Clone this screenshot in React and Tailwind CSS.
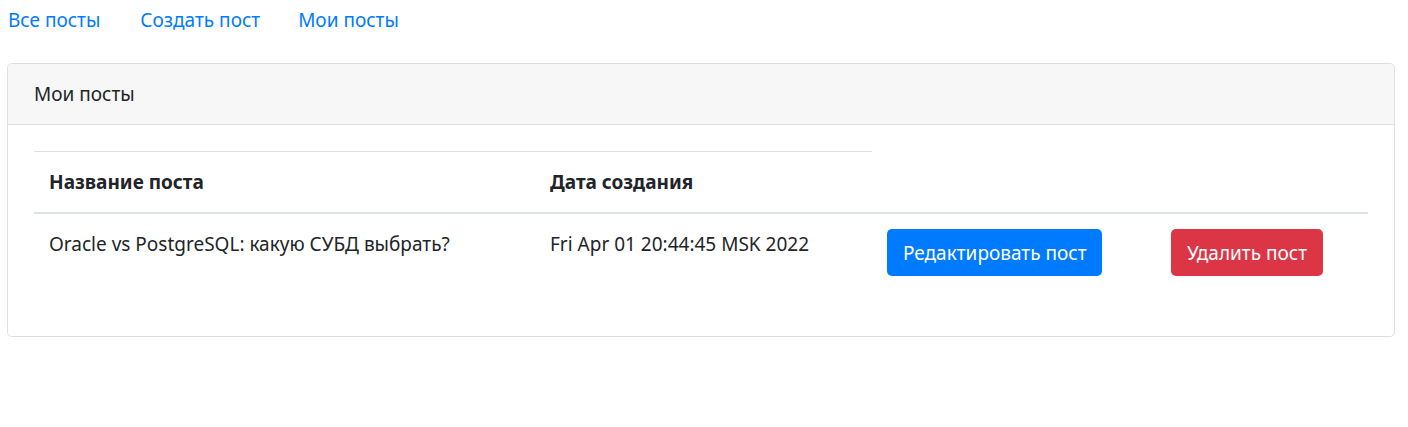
import React from 'react'

const posts = [
  { id: 1, title: 'Oracle vs PostgreSQL: какую СУБД выбрать?', date: 'Fri Apr 01 20:44:45 MSK 2022' },
]

const App = () => {
  return (
    <div className="min-h-[427px] bg-white text-[19px] leading-[30px] text-[#212529]" style={{ fontFamily: '"Noto Sans", "Open Sans", sans-serif' }}>
      <nav className="flex pt-[5px] pl-[8px]">
        <a href="#" className="text-[#007bff] mr-[40px]">Все посты</a>
        <a href="#" className="text-[#007bff] mr-[38px]">Создать пост</a>
        <a href="#" className="text-[#007bff]">Мои посты</a>
      </nav>

      <div className="ml-[7px] mt-[28px] w-[1388px] rounded-[5px] border border-[#dfdfdf]">
        <div className="h-[61px] rounded-t-[5px] border-b border-[#dfdfdf] bg-[#f7f7f7] px-[26px] py-[15px]">
          Мои посты
        </div>
        <div className="p-[26px] pb-[45px]">
          <table className="w-full border-collapse text-left">
            <thead>
              <tr>
                <th className="w-[501px] border-t border-b-2 border-[#dee2e6] px-[15px] pt-[15px] pb-[15px] font-bold">Название поста</th>
                <th className="w-[337px] border-t border-b-2 border-[#dee2e6] px-[15px] pt-[15px] pb-[15px] font-bold">Дата создания</th>
              </tr>
            </thead>
            <tbody>
              {posts.map((post) => (
                <tr key={post.id}>
                  <td className="border-t-2 border-[#dee2e6] p-[15px] align-top">{post.title}</td>
                  <td className="border-t-2 border-[#dee2e6] p-[15px] align-top">{post.date}</td>
                  <td className="w-[284px] border-t-2 border-[#dee2e6] p-[15px]">
                    <button className="block h-[47px] rounded-[5px] bg-[#007bff] px-[16px] leading-[30px] text-white">Редактировать пост</button>
                  </td>
                  <td className="border-t-2 border-[#dee2e6] p-[15px]">
                    <button className="block h-[47px] rounded-[5px] bg-[#dc3545] px-[16px] leading-[30px] text-white">Удалить пост</button>
                  </td>
                </tr>
              ))}
            </tbody>
          </table>
        </div>
      </div>
    </div>
  )
}

export default App
